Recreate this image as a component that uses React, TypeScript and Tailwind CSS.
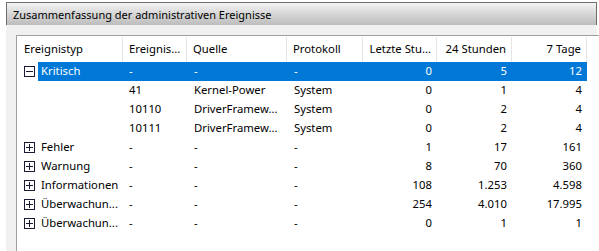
import React from 'react';

type Row = {
  toggle?: '+' | '-';
  label?: string;
  id: string;
  source: string;
  log: string;
  hour: string;
  day: string;
  week: string;
  selected?: boolean;
};

const ROWS: Row[] = [
  { toggle: '-', label: 'Kritisch', id: '-', source: '-', log: '-', hour: '0', day: '5', week: '12', selected: true },
  { id: '41', source: 'Kernel-Power', log: 'System', hour: '0', day: '1', week: '4' },
  { id: '10110', source: 'DriverFramew...', log: 'System', hour: '0', day: '2', week: '4' },
  { id: '10111', source: 'DriverFramew...', log: 'System', hour: '0', day: '2', week: '4' },
  { toggle: '+', label: 'Fehler', id: '-', source: '-', log: '-', hour: '1', day: '17', week: '161' },
  { toggle: '+', label: 'Warnung', id: '-', source: '-', log: '-', hour: '8', day: '70', week: '360' },
  { toggle: '+', label: 'Informationen', id: '-', source: '-', log: '-', hour: '108', day: '1.253', week: '4.598' },
  { toggle: '+', label: 'Überwachun...', id: '-', source: '-', log: '-', hour: '254', day: '4.010', week: '17.995' },
  { toggle: '+', label: 'Überwachun...', id: '-', source: '-', log: '-', hour: '0', day: '1', week: '1' },
];

const HEADERS = [
  { text: 'Ereignistyp', right: false },
  { text: 'Ereignis...', right: false },
  { text: 'Quelle', right: false },
  { text: 'Protokoll', right: false },
  { text: 'Letzte Stu...', right: true },
  { text: '24 Stunden', right: true },
  { text: '7 Tage', right: true },
];

const COLS = 'grid grid-cols-[106px_64px_100px_76px_74px_75px_75px]';

function Toggle({ kind }: { kind: '+' | '-' }) {
  return (
    <svg width="11" height="11" viewBox="0 0 11 11" className="block">
      <rect x="0.5" y="0.5" width="10" height="10" fill="white" stroke="#1a1a33" />
      <line x1="2" y1="5.5" x2="9" y2="5.5" stroke="#1a1a33" />
      {kind === '+' && <line x1="5.5" y1="2" x2="5.5" y2="9" stroke="#1a1a33" />}
    </svg>
  );
}

export default function App() {
  return (
    <div className="w-[599px] h-[251px] bg-white overflow-hidden font-['Segoe_UI','Noto_Sans',sans-serif] text-[11.3px] text-black">
      <div className="ml-[6px] mt-[2px] w-[591px]">
        {/* Title bar */}
        <div className="h-[23px] border border-b-0 border-[#6d6d6d] bg-gradient-to-b from-[#f4f4f4] via-[#d6d6d6] to-[#bdbdbd] pl-[6px] flex items-center text-[11px] leading-none">
          Zusammenfassung der administrativen Ereignisse
        </div>
        <div className="bg-[#f0f0f0] pt-[10px] pl-[10px]">
          <div className="bg-white border-l border-t border-[#a0a0a0] w-[600px] h-[220px] pt-[1px]">
            {/* Header */}
            <div className={`${COLS} h-[25px]`}>
              {HEADERS.map((h, i) => (
                <div
                  key={i}
                  className={`border-r border-[#e5e5e5] flex items-center whitespace-nowrap px-[6px] ${i === 0 ? 'pl-[7px]' : ''} ${h.right ? 'justify-end pr-[5px]' : ''}`}
                >
                  {h.text}
                </div>
              ))}
            </div>
            {/* Rows */}
            {ROWS.map((r, i) => (
              <div key={i} className="flex h-[19px]">
                <div className="w-[21px] pl-[7px] flex items-center">
                  {r.toggle && <Toggle kind={r.toggle} />}
                </div>
                <div
                  className={`grid grid-cols-[85px_64px_100px_76px_74px_75px_75px] items-center ${r.selected ? 'bg-[#0078d7] text-white' : ''}`}
                >
                  <div className="pl-[3px] whitespace-nowrap">{r.label ?? ''}</div>
                  <div className="pl-[6px]">{r.id}</div>
                  <div className="pl-[7px] whitespace-nowrap">{r.source}</div>
                  <div className="pl-[7px]">{r.log}</div>
                  <div className="text-right pr-[5px]">{r.hour}</div>
                  <div className="text-right pr-[5px]">{r.day}</div>
                  <div className="text-right pr-[5px]">{r.week}</div>
                </div>
              </div>
            ))}
          </div>
        </div>
      </div>
    </div>
  );
}
